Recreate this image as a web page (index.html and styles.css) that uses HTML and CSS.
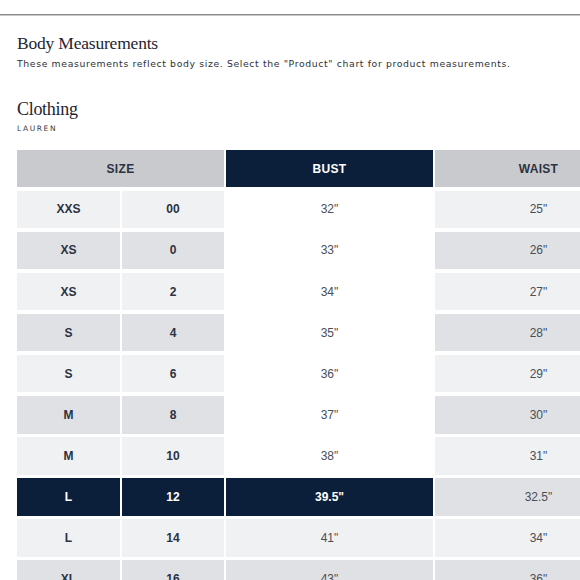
FILE: index.html
```html
<!DOCTYPE html>
<html>
<head>
<meta charset="utf-8">
<link rel="stylesheet" href="styles.css">
</head>
<body>
<div class="rule"></div>
<section class="intro">
  <h1 class="title">Body Measurements</h1>
  <p class="desc">These measurements reflect body size. Select the "Product" chart for product measurements.</p>
</section>
<section class="cat">
  <h2 class="cat-title">Clothing</h2>
  <p class="brand">LAUREN</p>
</section>
<div class="chart">
  <div class="th span2">SIZE</div>
  <div class="th active">BUST</div>
  <div class="th">WAIST</div>

  <div class="c lbl lt">XXS</div><div class="c lbl lt">00</div><div class="c val white">32"</div><div class="c val lt">25"</div>
  <div class="c lbl dk">XS</div><div class="c lbl dk">0</div><div class="c val white">33"</div><div class="c val dk">26"</div>
  <div class="c lbl lt">XS</div><div class="c lbl lt">2</div><div class="c val white">34"</div><div class="c val lt">27"</div>
  <div class="c lbl dk">S</div><div class="c lbl dk">4</div><div class="c val white">35"</div><div class="c val dk">28"</div>
  <div class="c lbl lt">S</div><div class="c lbl lt">6</div><div class="c val white">36"</div><div class="c val lt">29"</div>
  <div class="c lbl dk">M</div><div class="c lbl dk">8</div><div class="c val white">37"</div><div class="c val dk">30"</div>
  <div class="c lbl lt">M</div><div class="c lbl lt">10</div><div class="c val white">38"</div><div class="c val lt">31"</div>
  <div class="c lbl navy">L</div><div class="c lbl navy">12</div><div class="c val navy">39.5"</div><div class="c val dk">32.5"</div>
  <div class="c lbl lt">L</div><div class="c lbl lt">14</div><div class="c val lt">41"</div><div class="c val lt">34"</div>
  <div class="c lbl dk">XL</div><div class="c lbl dk">16</div><div class="c val dk">43"</div><div class="c val dk">36"</div>
</div>
</body>
</html>
```

FILE: styles.css
```css
html, body {
  margin: 0;
  padding: 0;
  background: #ffffff;
  overflow: hidden;
}
body {
  width: 580px;
  height: 580px;
}
.rule {
  margin-top: 14px;
  height: 1px;
  background: #8a8a8a;
  border-bottom: 1px solid #c8c8c8;
}
.intro {
  padding: 17px 0 0 17px;
}
.title {
  margin: 0;
  font-family: "Liberation Serif", "DejaVu Serif", serif;
  font-weight: normal;
  font-size: 17.5px;
  line-height: 20px;
  color: #1e2533;
  letter-spacing: -0.2px;
}
.desc {
  margin: 5px 0 0 0;
  font-family: "DejaVu Sans", Verdana, sans-serif;
  font-size: 9.3px;
  line-height: 12px;
  color: #2c2f36;
  letter-spacing: 0.63px;
}
.cat {
  padding: 28px 0 0 17px;
}
.cat-title {
  margin: 0;
  font-family: "Liberation Serif", "DejaVu Serif", serif;
  font-weight: normal;
  font-size: 18px;
  line-height: 22px;
  color: #1e2533;
  letter-spacing: -0.3px;
}
.brand {
  margin: 4px 0 0 0;
  font-family: "DejaVu Sans", Verdana, sans-serif;
  font-size: 7.5px;
  line-height: 10px;
  color: #3a3d44;
  letter-spacing: 1.6px;
}
.chart {
  margin: 16px 0 0 17px;
  display: grid;
  grid-template-columns: 103px 102px 207px 207px;
  grid-template-rows: 37px;
  grid-auto-rows: 37.5px;
  column-gap: 2px;
  row-gap: 3.6px;
  width: 625px;
  font-family: "Liberation Sans", Arial, sans-serif;
}
.th {
  display: flex;
  align-items: center;
  justify-content: center;
  background: #c9cacd;
  color: #2b3242;
  font-weight: bold;
  font-size: 12px;
  letter-spacing: 0.3px;
}
.th.span2 {
  grid-column: span 2;
}
.th.active {
  background: #0b1f3b;
  color: #ffffff;
}
.c {
  display: flex;
  align-items: center;
  justify-content: center;
  font-size: 12px;
}
.lbl {
  font-weight: bold;
  color: #2b3242;
}
.val {
  color: #4a4e57;
}
.lt {
  background: #f0f1f3;
}
.dk {
  background: #e0e1e5;
}
.white {
  background: #ffffff;
}
.navy {
  background: #0b1f3b;
  color: #ffffff;
  font-weight: bold;
}
```
